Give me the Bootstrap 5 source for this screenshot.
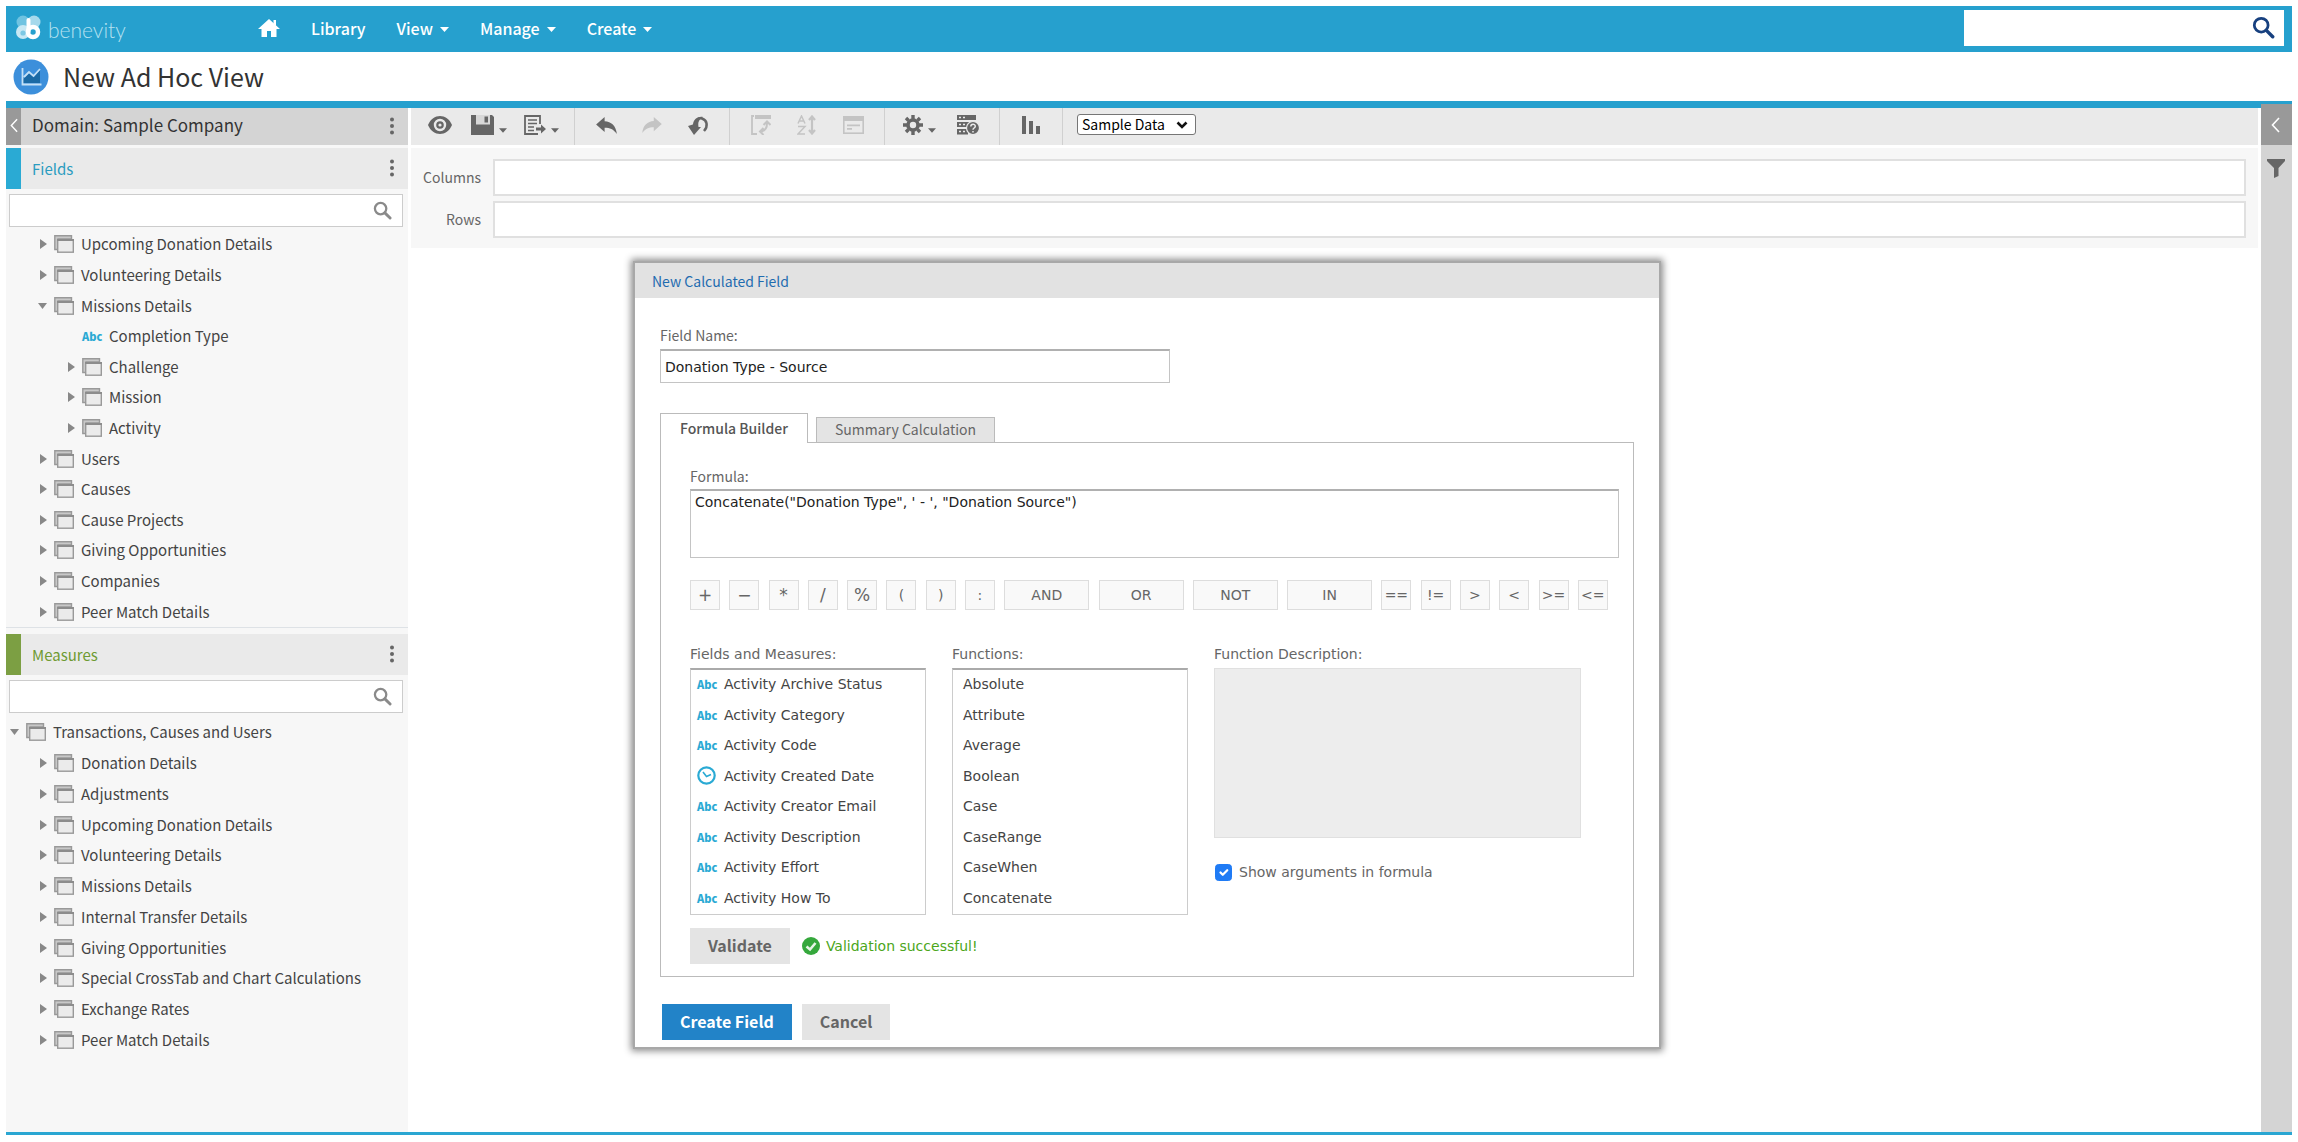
<!DOCTYPE html>
<html lang="en">
<head>
<meta charset="utf-8">
<meta name="viewport" content="width=device-width, initial-scale=1">
<title>New Ad Hoc View</title>
<link rel="stylesheet" href="https://cdn.jsdelivr.net/npm/bootstrap@5.3.0/dist/css/bootstrap.min.css">
<style>
:root{--blue:#26a0ce;--ink:#444;--soft:#666;--humanist:"Noto Sans CJK SC","Noto Sans",sans-serif;--wide:"DejaVu Sans",Verdana,sans-serif}
body{font-family:var(--humanist);font-size:15px;line-height:20px;color:var(--ink);background:#fff}
button,input,select,textarea{font-family:inherit;font-size:inherit;line-height:inherit}
.page{min-height:100vh;padding:6px 6px 7px}
.plain{border:0;background:none;padding:0;color:inherit}
svg{display:block;flex:none}
/* top bar */
.topbar{background:var(--blue);height:46px;padding:0 8px 3px 8px}
.brand{width:244px;color:#b5e0f0;font:300 21px/24px Lato,sans-serif}
.brand:hover{color:#fff}
.brand span{padding-top:4px}
.topbar .nav{gap:31px}
.topbar .nav-link{color:#fff;padding:0;font-size:16px;font-weight:500;display:flex;align-items:center;gap:7px}
.topsearch{width:320px;height:36px;background:#fff;padding:0 9px 0 6px;color:#17407f}
.bare{border:0;outline:0;background:none;min-width:0;flex:1}
.titlebar{height:49px;padding:0 7px;color:#333}
.titlebar h1{font-size:25px;line-height:32px;font-weight:400;margin:0 0 2px 14px}
.rule{height:7px;background:var(--blue)}
/* side panel */
.side{width:402px;background:#f7f7f7}
.domain{height:37px;background:#d4d4d4;color:#333;margin-bottom:3px}
.grip,.grip.plain{width:15px;align-self:stretch;background:#999;color:#fff;padding-bottom:3px}
.sec{height:41px;background:#eaeaea}
.sec .stripe{width:15px;align-self:stretch}
.sec h2,.domain h2{font-size:15px;line-height:20px;font-weight:400;flex:1;margin:0 0 0 11px}
.domain h2{font-size:17px;padding-bottom:4px}
.fields .stripe{background:#2aaad4}.fields h2{color:#2a9cc0}
.measures .stripe{background:#7c9f43}.measures h2{color:#6f9a32}
.measures .sec{margin-top:6px}
.kebab,.plain.kebab{padding:0 14px 2px 13px}
.find{height:33px;margin:5px 5px 0 3px;border:1px solid #ccc;background:#fff;padding:0 10px 0 6px;color:#8a8a8a}
.tree{margin:0;padding:0;list-style:none;display:flex;flex-direction:column}
.tree li{flex:1;display:flex;align-items:center;gap:7px;padding-left:32px}
.tree li.top{padding-left:4px}.tree li.deep{padding-left:60px}
.tree-a{height:398px;margin-top:2px}.tree-b{height:338px;margin-top:4px}
.tw{width:9px}
.abc{color:#2aaad4;font-weight:900;font-size:11px}
.tree .abc{width:20px;margin-left:16px;margin-right:0}
.tree li.leaf{padding-left:60px}
/* toolbar */
.work{margin:0 3px}
.tools{height:37px;background:#eaeaea;color:#666}
.tools>div{border-right:1px solid #d0d0d0;height:100%;padding:0 8px}
.tools>div:first-child{padding:0 7px 0 6px}
.tools>div:last-child{border:0;padding:0 14px 4px}
.tb{width:46px;height:34px;display:flex;align-items:center;justify-content:center;gap:5px}
.tb.drop{width:52px}
.tb:disabled{color:#c4c4c4}
.tb .caret{margin-top:10px}
.pick{width:119px;height:21px;border:1px solid #767676;border-radius:3px;background:#fff;color:#000;appearance:none;padding:0 4px;font-size:14px;line-height:17px}
.pick+svg{margin-left:-20px;pointer-events:none}
.shelf{background:#f7f7f7;margin-top:3px;padding:11px 12px 10px 12px;gap:5px;height:100px;color:var(--soft);font-size:14px}
.shelf label{width:58px;text-align:right;margin-right:12px;padding-bottom:2px}
.shelf input{flex:1;height:37px;border:2px solid #e0e0e0;background:#fff}
.rail{width:31px;background:#d4d4d4;margin-top:-4px}
.rail .grip.plain{width:31px;height:41px;align-self:auto;padding:0 3px 0 0}
.rail>svg{margin:14px 0 0 6px}
.base{height:3px;background:#2aa6d2}
/* dialog */
.dlg{position:absolute;top:263px;left:calc(50% - 2px);transform:translateX(-50%);width:1024px;background:#fff;box-shadow:0 0 0 2px #a8a8a8,0 0 7px 4px rgba(0,0,0,.45)}
.dlg-head{height:35px;background:#e2e2e2;padding:0 17px;font-size:14px;color:#1f6cb0}
.dlg-body{padding:27px 25px 7px}
.lab{font-size:14px;line-height:20px;color:var(--soft);display:block;margin-bottom:4px}
.v{font-family:var(--wide);font-size:14px}
.box{border:1px solid #c4c4c4;border-top:2px solid #b0b0b0;background:#fff;color:#222;padding:0 4px;width:510px;height:34px;display:block}
.nav-tabs{border:0;margin-top:30px;gap:8px;align-items:flex-end}
.nav-tabs .nav-link{border:1px solid #bbb;border-radius:0;border-bottom:0;height:25px;padding:0 18px 2px;font-size:14px;line-height:21px;margin:0;color:var(--soft);background:#e4e4e4}
.nav-tabs .nav-link.active{height:30px;padding:0 19px 1px;background:#fff;color:#555;font-weight:500;margin-bottom:-1px;border-color:#bbb;line-height:28px;position:relative}
.pane{border:1px solid #bbb;padding:23px 14px 12px 29px}
.pane>.lab{margin-bottom:3px}
.formula{width:100%;height:69px;resize:none;padding:1px 4px;line-height:20px}
.ops{margin:22px 11px 0 0}
.op{width:30px;height:30px;border:1px solid #ddd;background:#f9f9f9;color:var(--soft);padding:0}
.op.w{width:85px}
.op.s{font-size:17px}
.lists{margin-top:34px;gap:26px}
.pickl{width:236px;height:247px;list-style:none;margin:0;padding:0;border:1px solid #ccc;border-top:2px solid #aaa;color:#444;display:flex;flex-direction:column}
.pickl li{flex:1;display:flex;align-items:center;padding:0 0 2px 6px}
.pickl.fn li{padding-left:10px}
.pickl .ico{width:27px;font-family:var(--humanist)}
.desc{width:367px;height:170px;background:#ededed;border:1px solid #e0e0e0}
.show-args{margin:24px 0 0 1px;color:var(--soft)}
.show-args input{width:17px;height:17px;margin:0 7px 0 0}
.show-args input:checked{background-color:#1f7bf5;border-color:#1f7bf5}
.verdict{margin-top:13px}
.verdict svg{margin:0 6px 0 12px}
.btn{border-radius:0;border:0;font-size:16px;font-weight:700;line-height:20px;padding:0 18px 2px;height:36px;font-family:var(--humanist)}
.btn-soft{background:#e4e4e4;color:var(--soft)}
.btn-go{background:#2283c8;color:#fff}
.ok{color:#4ca61a}
.foot{margin:27px 0 0 2px;gap:10px}
</style>
<script src="https://cdn.jsdelivr.net/npm/bootstrap@5.3.0/dist/js/bootstrap.bundle.min.js"></script>
</head>
<body>
<svg width="0" height="0" class="position-absolute" aria-hidden="true">
<symbol id="fold" viewBox="0 0 20 18"><path d="M.8.8H17.500V4H4V14.500H.8z" fill="#c8c8c8" stroke="#999" stroke-width="1.400"/><rect x="3.700" y="4.700" width="15.600" height="12.500" fill="#ebebeb" stroke="#999" stroke-width="1.400"/><path d="M3 5H20" stroke="#8c8c8c" stroke-width="2"/></symbol>
<symbol id="rt" viewBox="0 0 9 10"><path d="M2 0L9 5 2 10z" fill="#888"/></symbol>
<symbol id="dn" viewBox="0 0 9 10"><path d="M0 2H9L4.500 8z" fill="#888"/></symbol>
<symbol id="dots" viewBox="0 0 4 18"><circle cx="2" cy="2.500" r="2"/><circle cx="2" cy="9" r="2"/><circle cx="2" cy="15.500" r="2"/></symbol>
<symbol id="mag" viewBox="0 0 20 20"><circle cx="8" cy="8" r="6" fill="none" stroke="currentColor" stroke-width="2.400"/><path d="M12.500 12.500L18 18" stroke="currentColor" stroke-width="3" stroke-linecap="round"/></symbol>
<symbol id="car" viewBox="0 0 9 5"><path d="M0 0H9L4.500 5z" fill="currentColor"/></symbol>
<symbol id="lt" viewBox="0 0 9 16"><path d="M8 1L1.500 8 8 15" fill="none" stroke="currentColor" stroke-width="1.600"/></symbol>
<symbol id="undo" viewBox="0 0 22 18"><path d="M0 8L9 0V4.500C16 5 21 9 22 18 18 13 15 11.500 9 11.500V16z" fill="currentColor"/></symbol>
</svg>
<div class="page d-flex flex-column position-relative">
<header class="topbar d-flex align-items-center">
  <a href="#" class="brand d-flex align-items-center gap-1 text-decoration-none">
    <svg width="30" height="30" viewBox="0 0 30 30"><circle cx="9" cy="9" r="6.500" fill="#6fc3e1"/><circle cx="20" cy="9" r="6.500" fill="#a6d9ec"/><circle cx="9" cy="19" r="7" fill="#c7e8f4"/><circle cx="19" cy="19" r="5" fill="#26a0ce" stroke="#fff" stroke-width="4.500"/><path d="M14.500 7V19" stroke="#fff" stroke-width="4" stroke-linecap="round"/><circle cx="9" cy="20" r="2.600" fill="#7cc8e4"/></svg>
    <span>benevity</span></a>
  <nav class="nav flex-nowrap align-items-center flex-grow-1">
    <a class="nav-link" href="#" aria-label="Home"><svg width="22" height="18" viewBox="0 0 22 18"><path d="M11 0L22 10H18.500V18H13V12H9V18H3.500V10H0z" fill="#fff"/><path d="M15.500 1H18V7L15.500 5z" fill="#fff"/></svg></a>
    <a class="nav-link" href="#">Library</a>
    <a class="nav-link" href="#">View <svg width="9" height="5" class="mt-1"><use href="#car"/></svg></a>
    <a class="nav-link" href="#">Manage <svg width="9" height="5" class="mt-1"><use href="#car"/></svg></a>
    <a class="nav-link" href="#">Create <svg width="9" height="5" class="mt-1"><use href="#car"/></svg></a>
  </nav>
  <form class="topsearch d-flex align-items-center" role="search"><input class="bare" type="search" aria-label="Search repository"><button type="button" class="plain" aria-label="Search"><svg width="23" height="23"><use href="#mag"/></svg></button></form>
</header>
<div class="titlebar d-flex align-items-center">
  <svg width="36" height="36" viewBox="0 0 36 36"><circle cx="18" cy="18" r="17.500" fill="#3c8fdb"/><path d="M10 24V20L16 14 21 18 27 11V24z" fill="#1b6aa5"/><path d="M9.500 9V25.500H28.500M11 18L16 13 20.500 17 27 10" fill="none" stroke="#c4e0f5" stroke-width="1.800"/></svg>
  <h1>New Ad Hoc View</h1>
</div>
<div class="rule"></div>
<div class="d-flex flex-grow-1">
  <aside class="side">
    <div class="domain d-flex align-items-center"><button class="grip plain d-flex align-items-center justify-content-center" aria-label="Collapse panel"><svg width="8" height="15"><use href="#lt"/></svg></button><h2>Domain: Sample Company</h2><button class="plain kebab" aria-label="Domain menu"><svg width="4" height="18" fill="#666"><use href="#dots"/></svg></button></div>
    <section class="fields">
      <div class="sec d-flex align-items-center"><span class="stripe"></span><h2>Fields</h2><button class="plain kebab" aria-label="Fields menu"><svg width="4" height="18" fill="#666"><use href="#dots"/></svg></button></div>
      <div class="find d-flex align-items-center"><input class="bare" type="search" aria-label="Search fields"><svg width="19" height="19"><use href="#mag"/></svg></div>
      <ul class="tree tree-a">
        <li><svg class="tw" height="10"><use href="#rt"/></svg><svg width="20" height="18"><use href="#fold"/></svg>Upcoming Donation Details</li>
        <li><svg class="tw" height="10"><use href="#rt"/></svg><svg width="20" height="18"><use href="#fold"/></svg>Volunteering Details</li>
        <li><svg class="tw" height="10"><use href="#dn"/></svg><svg width="20" height="18"><use href="#fold"/></svg>Missions Details</li>
        <li class="leaf"><span class="abc">Abc</span>Completion Type</li>
        <li class="deep"><svg class="tw" height="10"><use href="#rt"/></svg><svg width="20" height="18"><use href="#fold"/></svg>Challenge</li>
        <li class="deep"><svg class="tw" height="10"><use href="#rt"/></svg><svg width="20" height="18"><use href="#fold"/></svg>Mission</li>
        <li class="deep"><svg class="tw" height="10"><use href="#rt"/></svg><svg width="20" height="18"><use href="#fold"/></svg>Activity</li>
        <li><svg class="tw" height="10"><use href="#rt"/></svg><svg width="20" height="18"><use href="#fold"/></svg>Users</li>
        <li><svg class="tw" height="10"><use href="#rt"/></svg><svg width="20" height="18"><use href="#fold"/></svg>Causes</li>
        <li><svg class="tw" height="10"><use href="#rt"/></svg><svg width="20" height="18"><use href="#fold"/></svg>Cause Projects</li>
        <li><svg class="tw" height="10"><use href="#rt"/></svg><svg width="20" height="18"><use href="#fold"/></svg>Giving Opportunities</li>
        <li><svg class="tw" height="10"><use href="#rt"/></svg><svg width="20" height="18"><use href="#fold"/></svg>Companies</li>
        <li><svg class="tw" height="10"><use href="#rt"/></svg><svg width="20" height="18"><use href="#fold"/></svg>Peer Match Details</li>
      </ul>
    </section>
    <section class="measures border-top">
      <div class="sec d-flex align-items-center"><span class="stripe"></span><h2>Measures</h2><button class="plain kebab" aria-label="Measures menu"><svg width="4" height="18" fill="#666"><use href="#dots"/></svg></button></div>
      <div class="find d-flex align-items-center"><input class="bare" type="search" aria-label="Search measures"><svg width="19" height="19"><use href="#mag"/></svg></div>
      <ul class="tree tree-b">
        <li class="top"><svg class="tw" height="10"><use href="#dn"/></svg><svg width="20" height="18"><use href="#fold"/></svg>Transactions, Causes and Users</li>
        <li><svg class="tw" height="10"><use href="#rt"/></svg><svg width="20" height="18"><use href="#fold"/></svg>Donation Details</li>
        <li><svg class="tw" height="10"><use href="#rt"/></svg><svg width="20" height="18"><use href="#fold"/></svg>Adjustments</li>
        <li><svg class="tw" height="10"><use href="#rt"/></svg><svg width="20" height="18"><use href="#fold"/></svg>Upcoming Donation Details</li>
        <li><svg class="tw" height="10"><use href="#rt"/></svg><svg width="20" height="18"><use href="#fold"/></svg>Volunteering Details</li>
        <li><svg class="tw" height="10"><use href="#rt"/></svg><svg width="20" height="18"><use href="#fold"/></svg>Missions Details</li>
        <li><svg class="tw" height="10"><use href="#rt"/></svg><svg width="20" height="18"><use href="#fold"/></svg>Internal Transfer Details</li>
        <li><svg class="tw" height="10"><use href="#rt"/></svg><svg width="20" height="18"><use href="#fold"/></svg>Giving Opportunities</li>
        <li><svg class="tw" height="10"><use href="#rt"/></svg><svg width="20" height="18"><use href="#fold"/></svg>Special CrossTab and Chart Calculations</li>
        <li><svg class="tw" height="10"><use href="#rt"/></svg><svg width="20" height="18"><use href="#fold"/></svg>Exchange Rates</li>
        <li><svg class="tw" height="10"><use href="#rt"/></svg><svg width="20" height="18"><use href="#fold"/></svg>Peer Match Details</li>
      </ul>
    </section>
  </aside>
  <main class="work flex-grow-1">
    <div class="tools d-flex align-items-center">
      <div class="d-flex">
        <button class="plain tb" aria-label="Preview"><svg width="24" height="20" viewBox="0 0 24 20"><path d="M0 10C5 -2 19 -2 24 10 19 22 5 22 0 10z" fill="currentColor"/><circle cx="12" cy="10" r="5" fill="none" stroke="#eaeaea" stroke-width="2.400"/><circle cx="12" cy="10" r="1.600" fill="#eaeaea"/></svg></button>
        <button class="plain tb drop" aria-label="Save"><svg width="23" height="20" viewBox="0 0 23 20"><path d="M0 0H21L23 2V20H0z" fill="currentColor"/><path d="M5 0H19V9.500H5z" fill="#d8d8d8"/><path d="M13.500 1.500H17V7.500H13.500z" fill="currentColor"/></svg><svg class="caret" width="8" height="5"><use href="#car"/></svg></button>
        <button class="plain tb drop" aria-label="Export"><svg width="22" height="20" viewBox="0 0 22 20"><path d="M16 9V1H1V19H14" fill="none" stroke="currentColor" stroke-width="1.800"/><path d="M4 5H13M4 8.500H13M4 12H10M4 15.500H10" stroke="currentColor" stroke-width="1.700"/><path d="M12 12.500H17V9.500L22 14 17 18.500V15.500H12z" fill="currentColor"/></svg><svg class="caret" width="8" height="5"><use href="#car"/></svg></button>
      </div>
      <div class="d-flex">
        <button class="plain tb" aria-label="Undo"><svg width="21" height="17"><use href="#undo"/></svg></button>
        <button class="plain tb" disabled aria-label="Redo"><svg width="20" height="16" viewBox="0 0 22 18"><path d="M22 8L13 0V4.500C6 5 1 9 0 18 4 13 7 11.500 13 11.500V16z" fill="currentColor"/></svg></button>
        <button class="plain tb" aria-label="Undo all"><svg width="21" height="19" viewBox="0 0 21 19"><path d="M6 11C6 4 10 1.500 14 2.500 19 4 20.500 10 16 15" fill="none" stroke="currentColor" stroke-width="2.500"/><path d="M6.500 8C7 3 10 0 15 1 10 4 10 7 10.500 11H13L6 19 0 10z" fill="currentColor"/></svg></button>
      </div>
      <div class="d-flex">
        <button class="plain tb" disabled aria-label="Switch group"><svg width="20" height="20" viewBox="0 0 20 20"><path d="M4 0H20V4H4z" fill="currentColor"/><path d="M3 1H1V19H6" fill="none" stroke="currentColor" stroke-width="1.800"/><path d="M16 8C16 14 14 16 10 16.500M12.500 10L16 6.500 19.500 10M12.500 13L9 16.500 12.500 20" fill="none" stroke="currentColor" stroke-width="2"/></svg></button>
        <button class="plain tb" disabled aria-label="Sort"><svg width="20" height="20" viewBox="0 0 20 20"><path d="M1 8.500L4.500 1 8 8.500M2 6H7M1 11.500H8L1 19H8" fill="none" stroke="currentColor" stroke-width="1.500"/><path d="M15 2V18M12 5L15 1.500 18 5M12 15L15 18.500 18 15" fill="none" stroke="currentColor" stroke-width="2.200"/></svg></button>
        <button class="plain tb" disabled aria-label="Input controls"><svg width="21" height="18" viewBox="0 0 21 18"><rect x=".8" y=".8" width="19.400" height="16.400" fill="none" stroke="currentColor" stroke-width="1.600"/><path d="M0 0H21V5H0zM4 8.500H17V10.200H4zM4 12H9V13.700H4z" fill="currentColor"/></svg></button>
      </div>
      <div class="d-flex">
        <button class="plain tb drop" aria-label="Options"><svg width="20" height="20" viewBox="0 0 20 20"><circle cx="10" cy="10" r="5" fill="none" stroke="currentColor" stroke-width="3.600"/><path d="M10 0V4M10 16V20M0 10H4M16 10H20M3 3L5.500 5.500M14.500 14.500L17 17M3 17L5.500 14.500M14.500 5.500L17 3" stroke="currentColor" stroke-width="3.400"/></svg><svg class="caret" width="8" height="5"><use href="#car"/></svg></button>
        <button class="plain tb" aria-label="Query details"><svg width="24" height="20" viewBox="0 0 24 20"><path d="M1 0H20V5H1zM1 7H20V12H1zM1 14H12V19.500H1z" fill="currentColor"/><path d="M3 2.500H5M7 2.500H9M3 9.500H5M7 9.500H9M3 16.500H5M7 16.500H9" stroke="#eaeaea" stroke-width="1.300"/><circle cx="17" cy="13" r="6.500" fill="currentColor" stroke="#eaeaea" stroke-width="1.200"/><path d="M14.800 11.500C14.800 8.500 19.300 8.500 19.300 11.300 19.300 13 17 13 17 14.700M17 16V17.500" fill="none" stroke="#eaeaea" stroke-width="1.500"/></svg></button>
      </div>
      <div class="d-flex">
        <button class="plain tb" aria-label="Chart"><svg width="18" height="18" viewBox="0 0 18 18"><path d="M0 0H4V18H0zM7 5H11V18H7zM14 10H18V18H14z" fill="currentColor"/></svg></button>
      </div>
      <div class="d-flex align-items-center">
        <select class="pick" aria-label="Data mode"><option>Sample Data</option><option>Full Data</option><option>No Data</option></select><svg width="12" height="8" viewBox="0 0 12 8"><path d="M1.500 1.500L6 6 10.500 1.500" fill="none" stroke="#111" stroke-width="2.600"/></svg>
      </div>
    </div>
    <div class="shelf d-flex flex-column">
      <div class="d-flex align-items-center"><label for="cols">Columns</label><input id="cols" type="text"></div>
      <div class="d-flex align-items-center"><label for="rws">Rows</label><input id="rws" type="text"></div>
    </div>
  </main>
  <aside class="rail">
    <button class="grip plain d-flex align-items-center justify-content-center" aria-label="Expand filters"><svg width="9" height="16"><use href="#lt"/></svg></button>
    <svg width="18" height="19" viewBox="0 0 18 19"><path d="M0 0H18V2L11.500 9V17L7 19V9L0 2z" fill="#666"/></svg>
  </aside>
</div>
<div class="base"></div>

<section class="dlg" role="dialog" aria-labelledby="dt">
  <div class="dlg-head d-flex align-items-center" id="dt">New Calculated Field</div>
  <div class="dlg-body">
    <label class="lab" for="fname">Field Name:</label>
    <input id="fname" class="box v" type="text" value="Donation Type - Source">
    <ul class="nav nav-tabs" role="tablist">
      <li class="nav-item"><button class="nav-link active" role="tab" aria-selected="true">Formula Builder</button></li>
      <li class="nav-item"><button class="nav-link" role="tab" aria-selected="false">Summary Calculation</button></li>
    </ul>
    <div class="pane">
      <label class="lab" for="formula">Formula:</label>
      <textarea id="formula" class="box v formula">Concatenate("Donation Type", ' - ', "Donation Source")</textarea>
      <div class="ops v d-flex justify-content-between">
        <button class="op s">+</button><button class="op s">−</button><button class="op s">*</button><button class="op s">/</button><button class="op s">%</button><button class="op">(</button><button class="op">)</button><button class="op">:</button><button class="op w">AND</button><button class="op w">OR</button><button class="op w">NOT</button><button class="op w">IN</button><button class="op">==</button><button class="op">!=</button><button class="op">&gt;</button><button class="op">&lt;</button><button class="op">&gt;=</button><button class="op">&lt;=</button>
      </div>
      <div class="lists v d-flex">
        <div><span class="lab v mb-0 pb-1" id="l1">Fields and Measures:</span>
          <ul class="pickl" aria-labelledby="l1">
            <li><span class="ico abc">Abc</span>Activity Archive Status</li>
            <li><span class="ico abc">Abc</span>Activity Category</li>
            <li><span class="ico abc">Abc</span>Activity Code</li>
            <li><span class="ico"><svg width="19" height="19" viewBox="0 0 19 19"><circle cx="9.500" cy="9.500" r="8.200" fill="none" stroke="#2aaad4" stroke-width="2.200"/><path d="M6 6L9.500 10.500 14 8.500" fill="none" stroke="#2aaad4" stroke-width="1.600"/></svg></span>Activity Created Date</li>
            <li><span class="ico abc">Abc</span>Activity Creator Email</li>
            <li><span class="ico abc">Abc</span>Activity Description</li>
            <li><span class="ico abc">Abc</span>Activity Effort</li>
            <li><span class="ico abc">Abc</span>Activity How To</li>
          </ul></div>
        <div><span class="lab v mb-0 pb-1" id="l2">Functions:</span>
          <ul class="pickl fn" aria-labelledby="l2"><li>Absolute</li><li>Attribute</li><li>Average</li><li>Boolean</li><li>Case</li><li>CaseRange</li><li>CaseWhen</li><li>Concatenate</li></ul></div>
        <div><span class="lab v mb-0 pb-1">Function Description:</span>
          <div class="desc"></div>
          <div class="show-args d-flex align-items-center"><input class="form-check-input" type="checkbox" id="args" checked><label for="args">Show arguments in formula</label></div></div>
      </div>
      <div class="verdict d-flex align-items-center"><button class="btn btn-soft">Validate</button>
        <svg width="18" height="18" viewBox="0 0 18 18"><circle cx="9" cy="9" r="9" fill="#35a83c"/><path d="M4.500 9.500L8 12.500 13.500 6" fill="none" stroke="#e6f5e6" stroke-width="2.600"/></svg><span class="v ok">Validation successful!</span></div>
    </div>
    <div class="foot d-flex"><button class="btn btn-go">Create Field</button><button class="btn btn-soft">Cancel</button></div>
  </div>
</section>
</div>
</body>
</html>
